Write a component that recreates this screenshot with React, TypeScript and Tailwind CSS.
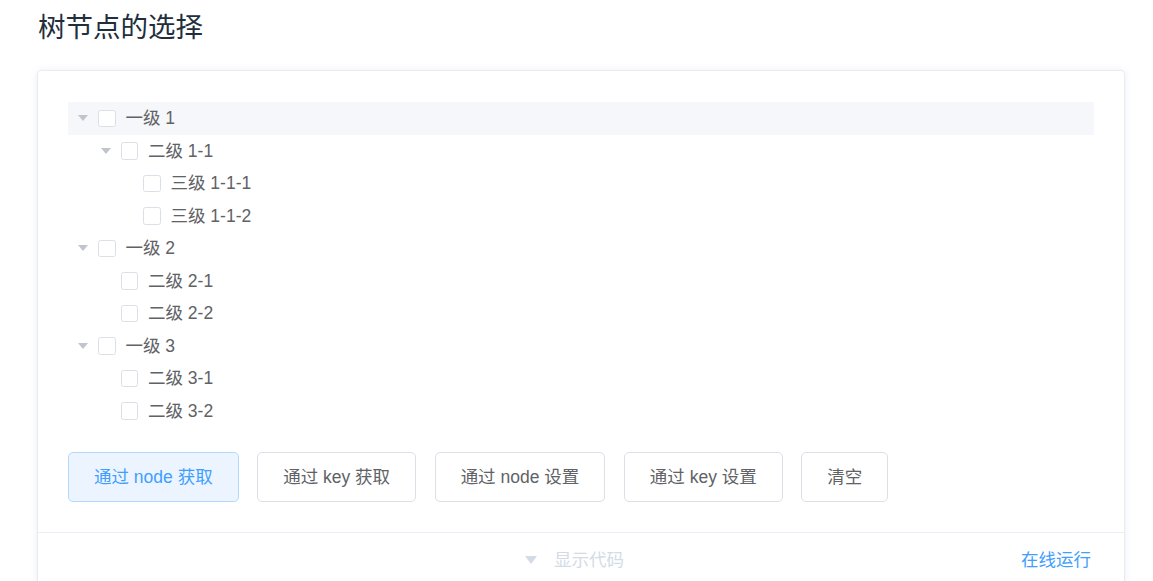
import React from "react";

type Node = { label: string; level: number; leaf?: boolean; hover?: boolean };

const nodes: Node[] = [
  { label: "一级 1", level: 0, hover: true },
  { label: "二级 1-1", level: 1 },
  { label: "三级 1-1-1", level: 2, leaf: true },
  { label: "三级 1-1-2", level: 2, leaf: true },
  { label: "一级 2", level: 0 },
  { label: "二级 2-1", level: 1, leaf: true },
  { label: "二级 2-2", level: 1, leaf: true },
  { label: "一级 3", level: 0 },
  { label: "二级 3-1", level: 1, leaf: true },
  { label: "二级 3-2", level: 1, leaf: true },
];

const buttons = ["通过 node 获取", "通过 key 获取", "通过 node 设置", "通过 key 设置", "清空"];

function Caret({ hidden }: { hidden?: boolean }) {
  return (
    <span className="flex w-[30px] h-full items-center justify-center shrink-0">
      {!hidden && (
        <svg width="10" height="6" viewBox="0 0 10 6">
          <path d="M0 0 L10 0 L5 6 Z" fill="#c0c4cc" />
        </svg>
      )}
    </span>
  );
}

function TreeRow({ node }: { node: Node }) {
  return (
    <div
      className={`flex items-center h-[32.5px] ${node.hover ? "bg-[#f5f7fa]" : ""}`}
      style={{ paddingLeft: node.level * 22.5 }}
    >
      <Caret hidden={node.leaf} />
      <span className="mr-[10px] w-[17.5px] h-[17.5px] border border-[#dcdfe6] rounded-[2.5px] bg-white shrink-0" />
      <span className="text-[17.5px] text-[#606266]">{node.label}</span>
    </div>
  );
}

export default function App() {
  return (
    <div
      className="w-[1153px] h-[581px] overflow-hidden bg-white"
      style={{ fontFamily: '"Liberation Sans", "Noto Sans CJK SC", sans-serif' }}
    >
      <div className="pl-[37px] pt-[8px] pr-[28px]">
        <h3 className="ml-[1px] text-[27.5px] leading-[40px] text-[#1f2f3d] font-normal">树节点的选择</h3>
        <div className="mt-[22px] border border-[#ebebeb] rounded-[4px] shadow-[0_0_8px_0_rgba(232,237,250,0.6),0_2px_4px_0_rgba(232,237,250,0.5)]">
          <div className="px-[30px] pt-[31px] pb-[30px]">
            <div>
              {nodes.map((n, i) => (
                <TreeRow key={i} node={n} />
              ))}
            </div>
            <div className="flex gap-[18.5px] mt-[25px]">
              {buttons.map((b, i) => (
                <button
                  key={b}
                  className={`h-[50px] px-[25px] rounded-[5px] border text-[17.5px] ${
                    i === 0
                      ? "bg-[#ecf5ff] border-[#b3d8ff] text-[#409eff]"
                      : "bg-white border-[#dcdfe6] text-[#606266]"
                  }`}
                >
                  {b}
                </button>
              ))}
            </div>
          </div>
          <div className="relative h-[55px] border-t border-[#eaeefb] flex items-center justify-center">
            <div className="flex items-center gap-[17px] mr-[13px]">
              <svg width="12" height="8" viewBox="0 0 12 8">
                <path d="M0 0 L12 0 L6 8 Z" fill="#d3dce6" />
              </svg>
              <span className="text-[17.5px] text-[#d3dce6]">显示代码</span>
            </div>
            <span className="absolute right-[33px] text-[17.5px] text-[#409eff]">在线运行</span>
          </div>
        </div>
      </div>
    </div>
  );
}
